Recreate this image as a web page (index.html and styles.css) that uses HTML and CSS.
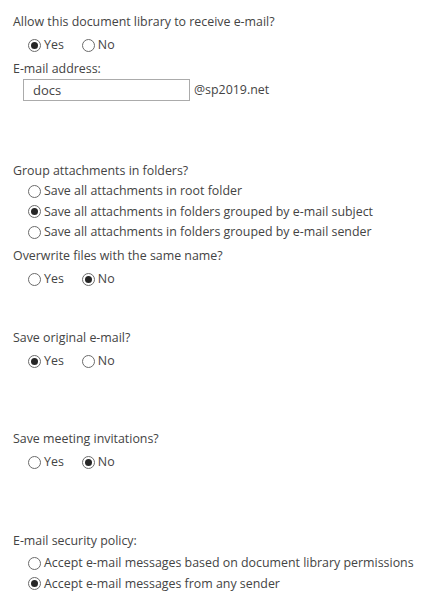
FILE: index.html
```html
<!DOCTYPE html>
<html>
<head>
<meta charset="utf-8">
<link rel="stylesheet" href="styles.css">
</head>
<body>
<div class="form">
  <div class="label l1">Allow this document library to receive e-mail?</div>
  <div class="inline-group g1">
    <label class="radio"><span class="dot on"></span>Yes</label>
    <label class="radio"><span class="dot"></span>No</label>
  </div>
  <div class="label l2">E-mail address:</div>
  <div class="address">
    <div class="input">docs</div>
    <span class="domain">@sp2019.net</span>
  </div>

  <div class="label l3">Group attachments in folders?</div>
  <div class="list-group g2">
    <label class="radio"><span class="dot"></span>Save all attachments in root folder</label>
    <label class="radio"><span class="dot on"></span>Save all attachments in folders grouped by e-mail subject</label>
    <label class="radio"><span class="dot"></span>Save all attachments in folders grouped by e-mail sender</label>
  </div>
  <div class="label l4">Overwrite files with the same name?</div>
  <div class="inline-group g1">
    <label class="radio"><span class="dot"></span>Yes</label>
    <label class="radio"><span class="dot on"></span>No</label>
  </div>

  <div class="label l5">Save original e-mail?</div>
  <div class="inline-group g1">
    <label class="radio"><span class="dot on"></span>Yes</label>
    <label class="radio"><span class="dot"></span>No</label>
  </div>

  <div class="label l6">Save meeting invitations?</div>
  <div class="inline-group g1">
    <label class="radio"><span class="dot"></span>Yes</label>
    <label class="radio"><span class="dot on"></span>No</label>
  </div>

  <div class="label l7">E-mail security policy:</div>
  <div class="list-group g3">
    <label class="radio"><span class="dot"></span>Accept e-mail messages based on document library permissions</label>
    <label class="radio"><span class="dot on"></span>Accept e-mail messages from any sender</label>
  </div>
</div>
</body>
</html>
```
FILE: styles.css
```css
html, body {
  margin: 0;
  padding: 0;
  background: #ffffff;
}
body {
  font-family: "Open Sans", "Noto Sans", "Liberation Sans", sans-serif;
  font-size: 12.4px;
  color: #444444;
  width: 441px;
  height: 614px;
  overflow: hidden;
}
.form {
  display: flex;
  flex-direction: column;
  padding: 12px 0 0 13px;
}
.label {
  height: 20px;
  line-height: 20px;
  white-space: nowrap;
}
.l2 { margin-top: 4px; }
.l3 { margin-top: 60px; }
.l4 { margin-top: 3.5px; }
.l5 { margin-top: 39px; }
.l6 { margin-top: 58px; }
.l7 { margin-top: 59px; }

.inline-group {
  display: flex;
  gap: 18px;
  margin-top: 3px;
  padding-left: 15px;
}
.list-group {
  display: flex;
  flex-direction: column;
  padding-left: 15px;
}
.g2 { margin-top: 0; }
.g3 { margin-top: 2px; }
.list-group .radio { height: 20.5px; }

.radio {
  display: flex;
  align-items: center;
  height: 20px;
  line-height: 20px;
  white-space: nowrap;
}
.dot {
  box-sizing: border-box;
  width: 13px;
  height: 13px;
  border: 1px solid #6b6b6b;
  border-radius: 50%;
  margin-right: 3px;
  display: flex;
  align-items: center;
  justify-content: center;
  flex: none;
}
.dot.on::after {
  content: "";
  width: 7px;
  height: 7px;
  border-radius: 50%;
  background: #262626;
}

.address {
  display: flex;
  align-items: center;
  margin-top: 0;
  padding-left: 10px;
}
.input {
  box-sizing: border-box;
  width: 167px;
  height: 22px;
  border: 1px solid #ababab;
  padding: 0 9px;
  line-height: 20px;
  font-size: 13px;
  color: #444444;
}
.domain {
  margin-left: 4px;
  line-height: 20px;
}
```
